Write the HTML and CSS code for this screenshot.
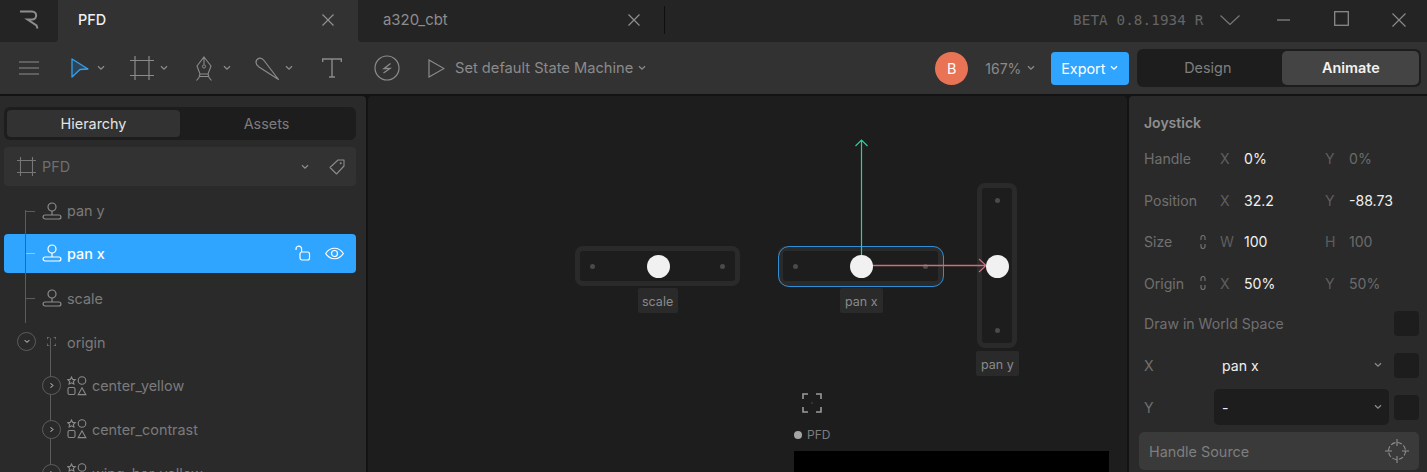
FILE: index.html
```html
<!DOCTYPE html>
<html lang="en">
<head>
<meta charset="utf-8">
<title>PFD</title>
<link rel="stylesheet" href="styles.css">
</head>
<body>
<svg class="defs" width="0" height="0">
  <defs>
    <symbol id="i-chev" viewBox="0 0 8 6"><path d="M1 1.2 4 4.2 7 1.2" fill="none" stroke="currentColor" stroke-width="1.3"/></symbol>
    <symbol id="i-joy" viewBox="0 0 20 18"><circle cx="10" cy="5" r="4" fill="none" stroke="currentColor" stroke-width="1.2"/><path d="M10 9v4" stroke="currentColor" stroke-width="1.2"/><rect x="1.1" y="13" width="17.8" height="4" rx="2" fill="none" stroke="currentColor" stroke-width="1.2"/></symbol>
    <symbol id="i-shapes" viewBox="0 0 20 20"><path d="M4.5 1 5.7 3.4 8.2 3.7 6.4 5.4 6.9 8 4.5 6.8 2.1 8 2.6 5.4.8 3.7 3.3 3.4Z" fill="none" stroke="currentColor" stroke-width="1.1"/><circle cx="15" cy="4.5" r="3.8" fill="none" stroke="currentColor" stroke-width="1.1"/><rect x="1" y="11.5" width="7" height="7" rx="1.5" fill="none" stroke="currentColor" stroke-width="1.1"/><path d="M15 11.8 18.8 18.6H11.2Z" fill="none" stroke="currentColor" stroke-width="1.1"/></symbol>
    <symbol id="i-link" viewBox="0 0 6 14"><path d="M1 5V2.5a2 2 0 0 1 4 0V5M1 9v2.5a2 2 0 0 0 4 0V9" fill="none" stroke="currentColor" stroke-width="1.2"/></symbol>
  </defs>
</svg>

<div class="app">
  <header class="titlebar">
    <div class="logo-cell">
      <svg class="logo" width="19" height="19" viewBox="0 0 19 19"><path d="M0 1.500H12C17.500 1.500 17.500 9.500 12 9.500H7.500L16.500 15.500 17.500 18.500" fill="none" stroke="#8d8d8d" stroke-width="2"/></svg>
    </div>
    <div class="tab tab-active">
      <span>PFD</span>
      <svg width="12" height="12" viewBox="0 0 12 12"><path d="M.5.5 11.500 11.500M11.500.5.5 11.500" stroke="#8f8f8f" stroke-width="1.200"/></svg>
    </div>
    <div class="tab tab-idle">
      <span>a320_cbt</span>
      <svg width="12" height="12" viewBox="0 0 12 12"><path d="M.5.5 11.500 11.500M11.500.5.5 11.500" stroke="#8f8f8f" stroke-width="1.200"/></svg>
    </div>
    <div class="tab-rule"></div>
    <div class="title-right">
      <span class="version">BETA 0.8.1934 R</span>
      <svg class="win-chev" width="20" height="10" viewBox="0 0 20 10"><path d="M.5.5 10 9.500 19.500.5" fill="none" stroke="#777" stroke-width="1.200"/></svg>
      <svg class="win-min" width="13" height="2" viewBox="0 0 13 2"><path d="M0 1H13" stroke="#8a8a8a" stroke-width="1.200"/></svg>
      <svg class="win-max" width="15" height="15" viewBox="0 0 15 15"><rect x=".7" y=".7" width="13.600" height="13.600" fill="none" stroke="#8a8a8a" stroke-width="1.300"/></svg>
      <svg class="win-close" width="14" height="14" viewBox="0 0 14 14"><path d="M.5.5 13.500 13.500M13.500.5.5 13.500" stroke="#8a8a8a" stroke-width="1.200"/></svg>
    </div>
  </header>

  <div class="toolbar">
    <svg class="t-menu" width="20" height="14" viewBox="0 0 20 14"><path d="M0 1H20M0 7H20M0 13H20" stroke="#8b8b8b" stroke-width="1.200"/></svg>
    <div class="tool t-select">
      <svg width="18" height="20" viewBox="0 0 18 20"><path d="M1 1 17 11 9 11.500 1 19Z" fill="#2d4557" stroke="#34a0f0" stroke-width="1.300" stroke-linejoin="round"/></svg>
      <svg class="chev" width="8" height="6"><use href="#i-chev"/></svg>
    </div>
    <div class="tool t-frame">
      <svg width="24" height="24" viewBox="0 0 24 24"><path d="M5 0V24M19 0V24M0 4.500H24M0 19.500H24" fill="none" stroke="#8b8b8b" stroke-width="1.200"/></svg>
      <svg class="chev" width="8" height="6"><use href="#i-chev"/></svg>
    </div>
    <div class="tool t-pen">
      <svg width="18" height="25" viewBox="0 0 18 25"><path d="M9 1 16 10 13 18H5L2 10ZM9 1V8.500M5 20.500H13M5 18 4 21.500 1.500 24.500M13 18 14 21.500 16.500 24.500" fill="none" stroke="#8b8b8b" stroke-width="1.100"/><circle cx="9" cy="10.500" r="1.600" fill="none" stroke="#8b8b8b" stroke-width="1"/></svg>
      <svg class="chev" width="8" height="6"><use href="#i-chev"/></svg>
    </div>
    <div class="tool t-brush">
      <svg width="24" height="24" viewBox="0 0 24 24"><path d="M23.500 23.500 9 4.500C6 .5 1 2 1 6.500 1 8.500 2 9.500 4 11Z" fill="none" stroke="#8b8b8b" stroke-width="1.200" stroke-linejoin="round"/></svg>
      <svg class="chev" width="8" height="6"><use href="#i-chev"/></svg>
    </div>
    <svg class="t-text" width="20" height="20" viewBox="0 0 20 20"><path d="M.7 4V1H19.300V4M10 1V19M7 19H13" fill="none" stroke="#8b8b8b" stroke-width="1.400"/></svg>
    <svg class="t-bolt" width="26" height="26" viewBox="0 0 26 26"><circle cx="13" cy="13" r="12" fill="none" stroke="#8b8b8b" stroke-width="1.200"/><path d="M16.500 8.500 10 13.500H16L9.500 18" fill="none" stroke="#8b8b8b" stroke-width="1.300"/></svg>
    <svg class="t-play" width="17" height="19" viewBox="0 0 17 19"><path d="M1 1 16 9.500 1 18Z" fill="none" stroke="#8b8b8b" stroke-width="1.200"/></svg>
    <span class="state">Set default State Machine</span>
    <svg class="chev state-chev" width="8" height="6"><use href="#i-chev"/></svg>
    <div class="avatar">B</div>
    <span class="zoom-val">167%</span>
    <svg class="chev zoom-chev" width="8" height="6"><use href="#i-chev"/></svg>
    <button class="export">Export <svg class="chev" width="8" height="6"><use href="#i-chev"/></svg></button>
    <div class="mode">
      <span class="mode-item">Design</span>
      <span class="mode-item mode-on">Animate</span>
    </div>
  </div>

  <main class="workspace">
    <aside class="left">
      <div class="seg">
        <span class="seg-item seg-on">Hierarchy</span>
        <span class="seg-item">Assets</span>
      </div>
      <div class="artboard">
        <svg width="19" height="19" viewBox="0 0 19 19"><path d="M3.500 0V19M15.500 0V19M0 3.500H19M0 15.500H19" fill="none" stroke="#777" stroke-width="1.100"/></svg>
        <span class="ab-name">PFD</span>
        <svg class="chev" width="8" height="6"><use href="#i-chev"/></svg>
        <svg class="tag" width="16" height="16" viewBox="0 0 16 16"><path d="M9 1H15V7L7.500 15 1 8.500Z" fill="none" stroke="#8b8b8b" stroke-width="1.100" stroke-linejoin="round"/><circle cx="11.700" cy="4.300" r="1" fill="#8b8b8b"/></svg>
      </div>
      <div class="tree">
        <span class="vline vline-a"></span>
        <span class="vline vline-b"></span>
        <div class="row"><span class="tick"></span><svg class="r-ico" width="20" height="18"><use href="#i-joy"/></svg><span>pan y</span></div>
        <div class="row row-sel"><span class="tick tick-sel"></span><svg class="r-ico" width="20" height="18"><use href="#i-joy"/></svg><span class="row-label">pan x</span>
          <svg class="lock" width="16" height="16" viewBox="0 0 16 16"><path d="M1 5V4a2.800 2.800 0 0 1 5.600 0V7" fill="none" stroke="#fff" stroke-width="1.200"/><rect x="5" y="7" width="9.500" height="8" rx="2" fill="none" stroke="#fff" stroke-width="1.200"/></svg>
          <svg width="19" height="13" viewBox="0 0 19 13"><path d="M.7 6.500C5 -.5 14-.5 18.300 6.500 14 13.500 5 13.500.7 6.500Z" fill="none" stroke="#fff" stroke-width="1.200"/><circle cx="9.500" cy="6.500" r="3" fill="none" stroke="#fff" stroke-width="1.200"/></svg>
        </div>
        <div class="row"><span class="tick"></span><svg class="r-ico" width="20" height="18"><use href="#i-joy"/></svg><span>scale</span></div>
        <div class="row">
          <span class="toggle toggle-a"><svg width="6" height="5"><use href="#i-chev"/></svg></span>
          <svg class="r-ico-small" width="9" height="9" viewBox="0 0 9 9"><path d="M0 2.500V0H2.500M6.500 0H9V2.500M9 6.500V9H6.500M2.500 9H0V6.500" fill="none" stroke="#8a8a8a" stroke-width="1"/></svg>
          <span class="nudge">origin</span>
        </div>
        <div class="row row-child"><span class="toggle"><svg class="rot" width="6" height="5"><use href="#i-chev"/></svg></span><svg class="s-ico" width="20" height="20"><use href="#i-shapes"/></svg><span>center_yellow</span></div>
        <div class="row row-child"><span class="toggle"><svg class="rot" width="6" height="5"><use href="#i-chev"/></svg></span><svg class="s-ico" width="20" height="20"><use href="#i-shapes"/></svg><span>center_contrast</span></div>
        <div class="row row-child"><span class="toggle"><svg class="rot" width="6" height="5"><use href="#i-chev"/></svg></span><svg class="s-ico" width="20" height="20"><use href="#i-shapes"/></svg><span>wing_bar_yellow</span></div>
      </div>
    </aside>

    <section class="canvas">
      <div class="joy joy-h joy-scale"><i class="dot d-l"></i><i class="dot d-r"></i></div>
      <b class="knob k-scale"></b>
      <span class="cap cap-scale">scale</span>

      <div class="joy joy-h joy-panx"><i class="dot d-l"></i><i class="dot d-r"></i></div>
      <span class="cap cap-panx">pan x</span>

      <div class="joy joy-v joy-pany"><i class="dot d-t"></i><i class="dot d-b"></i></div>
      <span class="cap cap-pany">pan y</span>

      <svg class="arrows" width="150" height="136" viewBox="0 0 150 136">
        <path d="M14.500 134V2M8.500 8 14.500 2 20.500 8" fill="none" stroke="#2bcf9f" stroke-width="1.200"/>
        <path d="M14 127.500H138M132 121 139 127.500 132 134" fill="none" stroke="#c5707a" stroke-width="1.300"/>
      </svg>
      <b class="knob k-panx"></b>
      <b class="knob k-pany"></b>

      <svg class="focus" width="20" height="20" viewBox="0 0 20 20"><path d="M1 6V1H6M14 1H19V6M19 14V19H14M6 19H1V14" fill="none" stroke="#9a9a9a" stroke-width="1.600"/><path d="M10 9.500V10.500" stroke="#777" stroke-width="1"/></svg>
      <div class="board-label"><i></i><span>PFD</span></div>
      <div class="board"></div>
    </section>

    <aside class="right">
      <h2 class="r-title">Joystick</h2>
      <div class="prop"><span class="p-name">Handle</span><span class="p-l">X</span><span class="p-v">0%</span><span class="p-l">Y</span><span class="p-v p-dim">0%</span></div>
      <div class="prop"><span class="p-name">Position</span><span class="p-l">X</span><span class="p-v">32.2</span><span class="p-l">Y</span><span class="p-v">-88.73</span></div>
      <div class="prop"><span class="p-name">Size</span><svg class="p-link" width="6" height="14"><use href="#i-link"/></svg><span class="p-l">W</span><span class="p-v">100</span><span class="p-l">H</span><span class="p-v p-dim">100</span></div>
      <div class="prop"><span class="p-name">Origin</span><svg class="p-link" width="6" height="14"><use href="#i-link"/></svg><span class="p-l">X</span><span class="p-v">50%</span><span class="p-l">Y</span><span class="p-v p-dim">50%</span></div>
      <div class="line"><span class="p-name grow">Draw in World Space</span><i class="check"></i></div>
      <div class="line"><span class="p-name axis">X</span><div class="select"><span>pan x</span><svg class="chev" width="8" height="6"><use href="#i-chev"/></svg></div><i class="check"></i></div>
      <div class="line"><span class="p-name axis">Y</span><div class="select select-on"><span>-</span><svg class="chev" width="8" height="6"><use href="#i-chev"/></svg></div><i class="check"></i></div>
      <div class="source">
        <span>Handle Source</span>
        <svg width="24" height="24" viewBox="0 0 24 24"><circle cx="12" cy="12" r="8.500" fill="none" stroke="#8f8f8f" stroke-width="1.100" stroke-dasharray="4.700 2"/><path d="M12 0V7M12 17V24M0 12H7M17 12H24" stroke="#8f8f8f" stroke-width="1.100"/></svg>
      </div>
    </aside>
  </main>
</div>
</body>
</html>
```
FILE: styles.css
```css
* { box-sizing: border-box; }
html, body { margin: 0; height: 100%; overflow: hidden; }
body { background: #131313; font-family: Inter, "Noto Sans", sans-serif; font-size: 14.400px; color: #8b8b8b; }
.defs { position: absolute; }
.app { width: 1427px; height: 472px; display: flex; flex-direction: column; overflow: hidden; }

.titlebar { height: 42px; flex: none; display: flex; align-items: stretch; background: #323232; }
.logo-cell { width: 58px; background: #242424; border-bottom-right-radius: 4px; display: flex; align-items: center; padding: 0 0 3px 20px; }
.tab { display: flex; align-items: center; justify-content: space-between; padding-bottom: 3px; }
.tab-active { width: 300px; padding-left: 20px; padding-right: 24px; color: #efefef; font-weight: 500; }
.tab-idle { width: 306px; padding-left: 25px; padding-right: 24px; background: #242424; color: #8d8d8d; border-bottom-left-radius: 4px; font-size: 14.900px; }
.tab-rule { width: 2px; background: #242424; position: relative; }
.tab-rule::after { content: ""; position: absolute; left: 0; top: 6px; width: 1px; height: 28px; background: #0f0f0f; }
.title-right { flex: 1; background: #242424; display: flex; align-items: center; position: relative; padding-bottom: 3px; }
.version { margin-left: 407px; font-family: "DejaVu Sans Mono", "Liberation Mono", monospace; font-size: 14.200px; color: #646464; letter-spacing: .15px; white-space: nowrap; }
.win-chev { margin-left: 17px; }
.win-min { margin-left: 37px; }
.win-max { margin-left: 44px; margin-top: -2px; }
.win-close { margin-left: 43px; }

.toolbar { height: 52px; flex: none; background: #323232; display: flex; align-items: center; }
.chev { color: #8b8b8b; display: block; flex: none; }
.tool { display: flex; align-items: center; gap: 6px; }
.t-menu { margin-left: 19px; }
.t-select { margin-left: 32px; gap: 8px; }
.t-frame { margin-left: 25px; }
.t-pen { margin-left: 27px; gap: 10px; }
.t-brush { margin-left: 24px; }
.t-text { margin-left: 29px; }
.t-bolt { margin-left: 32px; }
.t-play { margin-left: 28px; }
.state { margin-left: 10px; white-space: nowrap; color: #8b8b8b; font-size: 14.660px; }
.state-chev { margin-left: 5px; }
.avatar { width: 33px; height: 33px; margin-left: 289px; border-radius: 50%; background: #e97455; color: #fff; display: flex; align-items: center; justify-content: center; }
.zoom-val { margin-left: 17px; font-size: 14px; color: #8b8b8b; }
.zoom-chev { margin-left: 6px; }
.export { margin-left: 16px; width: 78px; height: 33px; border: 0; border-radius: 4px; background: #30a5ff; color: #fff; font: inherit; display: flex; align-items: center; justify-content: center; gap: 5px; padding: 0 1px 0 0; }
.export .chev { color: #fff; }
.mode { margin-left: 8px; width: 284px; height: 38px; background: #1d1d1d; border-radius: 6px; padding: 2px; display: flex; }
.mode-item { flex: 1; display: flex; align-items: center; justify-content: center; color: #7f7f7f; border-radius: 5px; padding-bottom: 1px; }
.mode-item:first-child { flex: 0 0 143px; padding-right: 6px; }
.mode-on { background: #444; color: #f2f2f2; font-weight: 600; }

.workspace { flex: 1; min-height: 0; display: flex; gap: 2px; background: #131313; padding-top: 2px; }
.left { width: 366px; background: #2a2a2a; border-top-right-radius: 4px; padding: 11px 10px 0 4px; flex: none; overflow: hidden; }
.seg { height: 33px; background: #1d1d1d; border-radius: 6px; padding: 3px; display: flex; }
.seg-item { flex: 1; display: flex; align-items: center; justify-content: center; color: #7c7c7c; border-radius: 4px; }
.seg-on { background: #323232; color: #e4e4e4; }
.artboard { height: 39px; margin-top: 7px; background: #323232; border-radius: 4px; display: flex; align-items: center; padding: 0 11px 0 13px; }
.ab-name { margin-left: 6px; flex: 1; color: #6f6f6f; }
.tag { margin-left: 20px; }
.tree { position: relative; margin-top: 5px; }
.row { height: 39px; margin-bottom: 4.800px; display: flex; align-items: center; padding-left: 38px; position: relative; color: #7a7a7a; border-radius: 4px; white-space: nowrap; }
.r-ico { margin-right: 5px; flex: none; color: #8b8b8b; }
.r-ico-small { margin: 0 11px 0 5px; flex: none; }
.nudge { padding-top: 2px; }
.row-sel { background: #30a5ff; color: #fff; font-weight: 500; padding-right: 12px; margin-top: -1px; margin-bottom: 5.800px; }
.row-sel .r-ico { color: #fff; }
.row-label { flex: 1; padding-top: 1px; }
.lock { margin-right: 14px; }
.tick { position: absolute; left: 21px; top: 50%; width: 10px; height: 1px; background: #5c5c5c; }
.tick-sel { background: rgba(255, 255, 255, .4); }
.vline { position: absolute; width: 1px; background: #5c5c5c; z-index: 1; }
.vline-a { left: 21px; top: 19px; height: 113px; }
.vline-b { left: 46px; top: 147px; height: 160px; }
.toggle { position: absolute; left: 13px; width: 19px; height: 19px; border: 1px solid #5c5c5c; border-radius: 50%; background: #2a2a2a; color: #e0e0e0; display: flex; align-items: center; justify-content: center; z-index: 2; }
.rot { transform: rotate(-90deg); }
.row-child { padding-left: 63px; }
.row-child .toggle { left: 38px; }
.s-ico { margin-right: 5px; flex: none; color: #8b8b8b; }

.canvas { flex: 1; min-width: 0; background: #1d1d1d; position: relative; overflow: hidden; border-radius: 4px 4px 0 0; }
.joy { position: absolute; border: 5px solid #2a2a2a; border-radius: 8px; background: #1d1d1d; }
.joy-h { width: 165px; height: 40px; top: 150px; }
.joy-v { width: 40px; height: 165px; left: 609px; top: 87px; }
.joy-scale { left: 207px; }
.joy-panx { left: 410px; }
.joy-panx::after { content: ""; position: absolute; inset: -5.500px -6px -5.500px -5.500px; border: 1.500px solid #2f8fd8; border-radius: 11px; }
.dot { position: absolute; width: 5px; height: 5px; border-radius: 50%; background: #4a4a4a; }
.d-l { left: 10px; top: 13px; }
.d-r { right: 10px; top: 13px; }
.d-t { top: 10px; left: 12.500px; }
.d-b { bottom: 10px; left: 12.500px; }
.knob { position: absolute; width: 23px; height: 23px; border-radius: 50%; background: #f1f1f1; top: 158.500px; z-index: 3; }
.k-scale { left: 278.500px; }
.k-panx { left: 481.500px; }
.k-pany { left: 617.500px; }
.cap { position: absolute; height: 25px; padding: 2px 5px 0; background: #2a2a2a; border-radius: 2px; color: #8a8a8a; font-size: 12.500px; display: flex; align-items: center; white-space: nowrap; }
.cap-scale { left: 270px; top: 192px; width: 40px; padding-left: 4px; padding-right: 4px; }
.cap-panx { left: 472px; top: 192px; }
.cap-pany { left: 608px; top: 255px; }
.arrows { position: absolute; left: 479px; top: 42px; z-index: 2; }
.focus { position: absolute; left: 434px; top: 297px; }
.board-label { position: absolute; left: 426px; top: 331px; display: flex; align-items: center; gap: 5px; color: #7d7d7d; font-size: 12px; }
.board-label i { width: 8px; height: 8px; border-radius: 50%; background: #a5a5a5; }
.board { position: absolute; left: 426px; top: 355px; width: 315px; height: 40px; background: #000; }

.right { width: 298px; flex: none; background: #2a2a2a; border-top-left-radius: 4px; padding: 0 8px 0 10px; overflow: hidden; font-size: 14.100px; }
.r-title { margin: 0; padding: 18px 0 0 5px; height: 42px; font-size: 14px; font-weight: 600; color: #8f8f8f; line-height: 17px; }
.prop { height: 41.500px; display: flex; align-items: center; padding-left: 5px; white-space: nowrap; position: relative; }
.p-name { color: #707070; }
.prop .p-name { width: 76px; flex: none; }
.p-link { position: absolute; left: 61px; color: #707070; }
.p-l { color: #5e5e5e; width: 24px; flex: none; }
.p-v { color: #f0f0f0; width: 81px; flex: none; }
.p-dim { color: #6a6a6a; }
.line { height: 38px; margin-bottom: 4px; display: flex; align-items: center; padding-left: 5px; }
.grow { flex: 1; }
.axis { width: 70px; flex: none; }
.check { width: 25px; height: 25px; border-radius: 4px; background: #1d1d1d; margin-left: 5px; flex: none; }
.select { width: 175px; height: 36px; border-radius: 5px; display: flex; align-items: center; justify-content: space-between; padding: 0 7px 0 8px; color: #f0f0f0; }
.select-on { background: #1d1d1d; }
.source { height: 38px; background: #3a3a3a; border-radius: 5px; display: flex; align-items: center; justify-content: space-between; padding: 0 10px; color: #7e7e7e; margin-top: 6px; font-size: 14.400px; }
```
